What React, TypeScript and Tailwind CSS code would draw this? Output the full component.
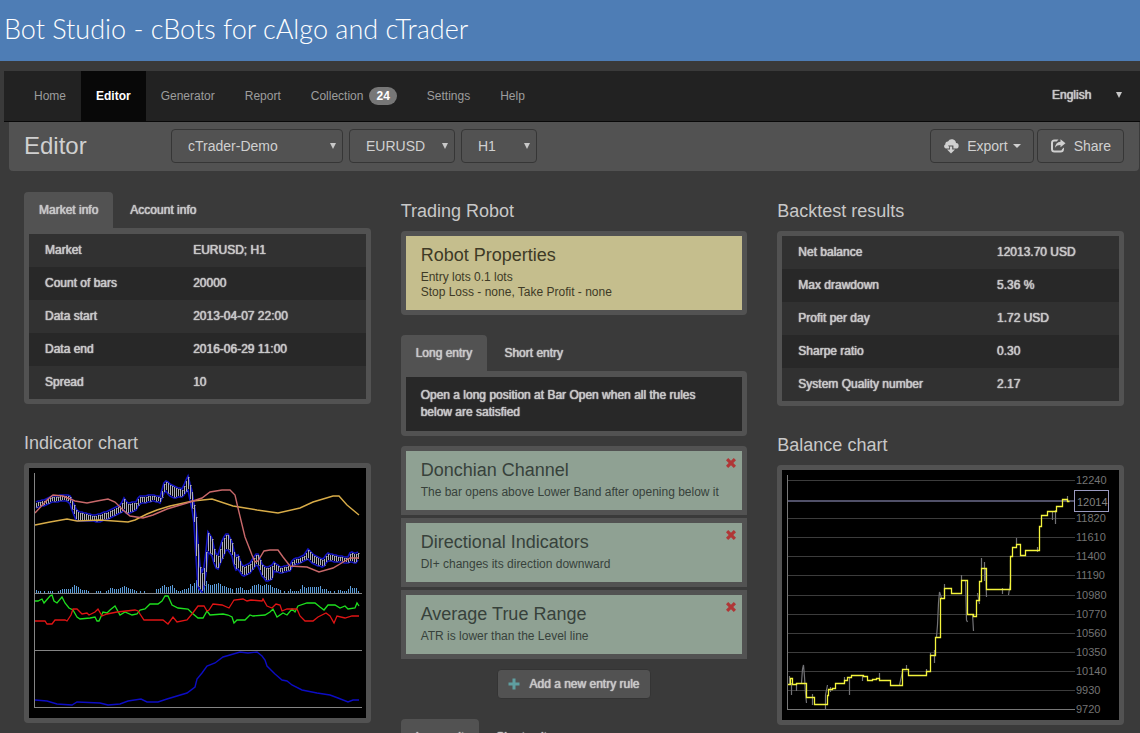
import { useState, type ReactNode } from 'react';

type Point = [number, number];

const navItems = ['Home', 'Editor', 'Generator', 'Report', 'Collection', 'Settings', 'Help'];

const marketInfo = [
  ['Market', 'EURUSD; H1'],
  ['Count of bars', '20000'],
  ['Data start', '2013-04-07 22:00'],
  ['Data end', '2016-06-29 11:00'],
  ['Spread', '10'],
];

const backtestResults = [
  ['Net balance', '12013.70 USD'],
  ['Max drawdown', '5.36 %'],
  ['Profit per day', '1.72 USD'],
  ['Sharpe ratio', '0.30'],
  ['System Quality number', '2.17'],
];

const initialRules = [
  { name: 'Donchian Channel', text: 'The bar opens above Lower Band after opening below it' },
  { name: 'Directional Indicators', text: 'DI+ changes its direction downward' },
  { name: 'Average True Range', text: 'ATR is lower than the Level line' },
];

// regular width letters with a heavier face
const strongText = '[text-shadow:0_0_1px_currentColor,0_0_1px_currentColor]';

// x, middle of the bar, half of its range
const price: [number, number, number][] = [
  [6, 37, 2], [14, 35, 2], [23, 31, 2], [38, 30, 2], [41, 32, 3], [46, 44, 5], [48, 48, 4], [63, 50, 2],
  [71, 50, 3], [84, 45, 3], [91, 41, 3], [95, 36, 5], [98, 41, 5], [107, 38, 3], [110, 32, 3], [124, 30, 2],
  [131, 32, 2], [136, 17, 4], [139, 20, 5], [144, 24, 5], [153, 25, 3], [159, 15, 6], [163, 32, 8],
  [166, 52, 9], [168, 85, 30], [170, 108, 12], [174, 116, 8], [177, 94, 10], [179, 74, 9], [183, 79, 8],
  [186, 92, 6], [189, 94, 6], [193, 82, 8], [198, 72, 7], [203, 81, 6], [206, 95, 6], [209, 94, 6],
  [214, 104, 4], [221, 100, 4], [228, 90, 5], [233, 102, 5], [238, 107, 6], [243, 104, 6], [244, 98, 4],
  [251, 102, 2], [261, 100, 2], [264, 94, 2], [274, 91, 2], [279, 86, 4], [284, 91, 4], [294, 95, 3],
  [299, 89, 3], [311, 91, 2], [319, 92, 2], [322, 88, 4], [326, 91, 4], [330, 87, 3],
];

const volume = [
  3, 2, 2, 0, 2, 0, 2, 2, 2, 0, 0, 2, 3, 4, 4, 4, 4, 4, 6, 8, 7, 6, 4, 3, 3, 3, 2, 0, 0, 0, 2, 2, 2, 0, 0, 2, 3,
  5, 5, 4, 4, 4, 5, 6, 7, 6, 5, 4, 4, 3, 2, 0, 2, 0, 2, 0, 0, 0, 0, 0, 4, 4, 5, 7, 8, 6, 6, 7, 8, 5, 3, 2, 2, 3,
  4, 4, 5, 9, 7, 10, 13, 10, 20, 10, 11, 12, 9, 8, 8, 9, 9, 10, 9, 7, 7, 6, 5, 5, 4, 0, 5, 5, 6, 5, 3, 3, 3, 4,
  7, 8, 8, 9, 8, 7, 8, 9, 8, 8, 6, 5, 5, 4, 3, 0, 2, 0, 2, 4, 2, 2, 2, 2, 4, 8, 6, 5, 6, 6, 6, 6, 6, 6, 7, 4, 4,
  4, 2, 2, 0, 2, 0, 3, 3, 2, 2, 2, 4, 7, 5, 5, 5, 2,
];

const slowAverage =
  '6,57 21,54 38,51 48,53 71,52 99,54 106,52 118,46 128,42 141,38 164,33 183,31 204,38 228,42 249,45 271,40 284,34 304,28 310,28 318,37 330,47';
const fastAverage =
  '6,45 18,32 24,27 34,28 46,33 58,35 68,33 79,31 86,34 94,42 101,48 114,50 124,47 138,41 158,35 173,30 181,24 193,22 201,22 206,27 209,40 216,69 223,87 226,94 229,93 235,83 241,82 249,82 254,89 261,98 278,99 290,104 304,100 316,93 321,90 330,90';
const diPlus =
  '6,133 9,133 13,131 15,135 21,128 23,127 25,133 28,135 33,129 36,135 40,140 44,142 48,149 51,151 61,150 66,149 68,153 70,153 74,144 78,145 81,142 86,138 91,147 96,144 103,147 108,146 111,142 116,141 121,136 129,136 133,133 136,128 139,128 143,137 149,140 159,141 163,145 169,150 174,150 178,143 181,147 194,146 199,147 203,149 205,155 208,152 216,152 221,147 224,148 236,147 241,144 244,141 248,149 254,145 258,147 263,141 266,144 269,138 278,135 286,135 291,139 295,142 299,137 306,137 311,140 316,138 319,141 326,140 328,135 330,138';
const diMinus =
  '6,153 16,153 18,156 23,156 26,152 36,152 38,153 42,147 44,141 48,141 53,146 58,145 60,147 66,144 69,141 73,148 78,146 88,144 106,142 109,143 115,152 134,152 139,156 144,149 148,154 158,152 163,146 169,138 175,138 178,143 180,142 184,136 193,137 200,140 205,132 214,131 218,133 222,132 233,133 234,131 238,138 243,140 247,136 251,137 253,143 258,141 268,141 271,148 276,153 284,153 289,149 297,145 301,148 305,155 308,148 316,150 323,148 330,148';
const trueRange =
  '6,232 18,233 28,236 43,237 48,234 71,235 79,237 91,236 99,233 112,231 118,234 129,234 138,231 158,225 166,219 168,211 173,205 178,198 186,195 194,189 201,187 211,184 219,185 228,184 233,188 236,192 238,198 246,206 253,212 258,213 263,217 273,222 288,225 301,227 309,230 319,234 324,232 330,232';

const balanceLine =
  'M6 214.5H8.5V208.5H10.5V214.5H14.5V213.5H24.5V227.5H32.5V234.5H45.5V225.5H46.5V219.5H50.5V218.5H53.5V213.5H62.5V210.5H65.5V207.5H69.5V205.5H81.5V206.5H85.5V210.5H90.5V209.5H94.5V208.5H97.5V210.5H108.5V215.5H120.5V199.5H126.5V205.5H144.5V201.5H148.5V185.5H153.5V167.5H158.5V128.5H162.5V118.5H169.5V123.5H179.5V110.5H185.5V144.5H191.5V146.5H194.5V130.5H197.5V111.5H199.5V98.5H204.5V119.5H228.5V86.5H230.5V77.5H234.5V74.5H238.5V85.5H243.5V80.5H257.5V56.5H259.5V45.5H265.5V41.5H274.5V36.5H280.5V29.5H285.5V31.5H287.5';
const equityLine =
  'M7.5 206V214M9.5 213V225M14.5 213V221M19.5 213L20.5 199L21.5 195L22.5 207L23.5 223L24.5 233M30.5 224V235M43.5 239V225L45.5 215M48.5 217V222M62.5 207V213M67.5 225V208M80.5 205V211M97.5 203V209M117.5 215L120.5 202M124.5 195V200M144.5 199V205M148.5 183V186M152.5 180V193M154.5 167L155.5 155L156.5 133L157.5 122L159.5 128M162.5 114V118M162.5 128V118M179.5 105V110M183.5 110L184.5 150L185.5 152M190.5 144L191.5 161M195.5 123L197.5 134M199.5 88V98M202.5 92V111M203.5 98L204.5 127M220.5 118V124M226.5 125L228.5 112V90M234.5 68V74M255.5 77V82M270.5 42V50M273.5 40V54M285.5 26V30';

const balanceTicks: Point[] = [
  [10, 12240], [48, 11820], [67, 11610], [86, 11400], [105, 11190], [125, 10980],
  [144, 10770], [163, 10560], [182, 10350], [201, 10140], [220, 9930], [239, 9720],
];

function priceAt(x: number): Point {
  const i = Math.max(1, price.findIndex((p) => p[0] >= x));
  const [x0, y0, r0] = price[i - 1];
  const [x1, y1, r1] = price[i];
  const k = (x - x0) / (x1 - x0);
  return [y0 + (y1 - y0) * k, r0 + (r1 - r0) * k];
}

const bars = volume.map((v, i) => {
  const x = 7 + i * 2;
  const [mid, range] = priceAt(x);
  return { x, v, high: Math.round(mid - range), low: Math.min(124, Math.round(mid + range)) };
});

function IndicatorChart() {
  return (
    <svg viewBox="0 0 337 250" preserveAspectRatio="xMinYMin slice" className="block w-full h-[250px] bg-black" role="img" aria-label="Indicator chart">
      <g fill="none" strokeWidth="1">
        {bars.map((b) => (
          <path key={b.x} d={`M${b.x + 0.5} 125V${125 - b.v}`} stroke="#5a9bd8" />
        ))}
        <polyline points={bars.map((b) => `${b.x},${b.high - 1}`).join(' ')} stroke="#1414c0" strokeWidth="1.7" />
        <polyline points={bars.map((b) => `${b.x},${b.low + 1}`).join(' ')} stroke="#1414c0" strokeWidth="1.7" />
        {bars.map((b, i) => (
          <path
            key={b.x}
            d={`M${b.x + 0.5} ${b.high}V${b.low}M${b.x + 0.5} ${(i % 3 ? b.high : b.low) + 0.5}h1`}
            stroke="#acacb8"
          />
        ))}
        <polyline points={slowAverage} stroke="#d8ac48" strokeWidth="1.4" />
        <polyline points={fastAverage} stroke="#c8686a" strokeWidth="1.4" />
        <polyline points={diPlus} stroke="#1ee01e" strokeWidth="1.3" />
        <polyline points={diMinus} stroke="#e01414" strokeWidth="1.3" />
        <polyline points={trueRange} stroke="#0c0cc4" strokeWidth="1.4" />
        <path d="M5.5 5V240M5 125.5H333M5 182.5H333M5 239.5H333" stroke="#848484" />
      </g>
    </svg>
  );
}

function BalanceChart() {
  return (
    <svg viewBox="0 0 337 250" preserveAspectRatio="xMinYMin slice" className="block w-full h-[250px] bg-black" role="img" aria-label="Balance chart">
      {balanceTicks.map(([y, label]) => (
        <g key={label}>
          <path d={`M6 ${y + 0.5}H293`} stroke={y === 239 ? '#777' : '#3c3c3c'} />
          <text x="294" y={y + 4} fontSize="11" fill="#747474">
            {label}
          </text>
        </g>
      ))}
      <path d="M6 31H292" stroke="#505068" strokeWidth="2" />
      <path d="M5.5 5V240" stroke="#777" />
      <path d={equityLine} fill="none" stroke="#727276" strokeWidth="1.2" />
      <path d={balanceLine} fill="none" stroke="#f4f43c" strokeWidth="1.3" />
      <rect x="292.5" y="20.5" width="34" height="21" fill="#000" stroke="#9a9ac0" />
      <text x="295" y="36" fontSize="11" fill="#808080">
        12014
      </text>
    </svg>
  );
}

function CloudDownloadIcon() {
  return (
    <svg viewBox="0 0 16 16" className="size-4" fill="currentColor" aria-hidden="true">
      <path d="M6.2 10.6V8.2h-1V7.6h5.2v3h2.3a2.8 2.8 0 0 0 .3-5.6A4.3 4.3 0 0 0 5 3.4a2.4 2.4 0 0 0-2.6 2.9A2.3 2.3 0 0 0 2.8 10.6z" />
      <path d="M7 8.6h2.2v2.8h2.8L8 15.4l-4-4h3z" />
    </svg>
  );
}

function ShareIcon() {
  return (
    <svg viewBox="0 0 16 16" className="size-4" fill="currentColor" aria-hidden="true">
      <path d="M8.5 1.500H4.500A3.500 3.500 0 0 0 1 5v6a3.500 3.500 0 0 0 3.500 3.500h6A3.500 3.500 0 0 0 14 11V9.500l-2 1.700A1.300 1.300 0 0 1 10.700 12.500H4.300A1.300 1.300 0 0 1 3 11.200V4.800a1.300 1.300 0 0 1 1.300-1.300h2.400z" />
      <path d="M10.500 1.200L15.500 5.300l-5 4V6.900C8 6.900 6.300 7.600 5 9.800 5.200 6.100 7.200 4 10.500 3.700z" />
    </svg>
  );
}

function RemoveIcon() {
  return (
    <svg viewBox="0 0 10 10" className="size-[10px]" fill="currentColor" aria-hidden="true">
      <path d="M2.200 0L5 2.800 7.800 0 10 2.200 7.300 5 10 7.800 7.800 10 5 7.200 2.200 10 0 7.800 2.700 5 0 2.200z" />
    </svg>
  );
}

function PlusIcon() {
  return (
    <svg viewBox="0 0 12 12" className="size-3" fill="currentColor" aria-hidden="true">
      <path d="M4.500.5h3v4h4v3h-4v4h-3v-4h-4v-3h4z" />
    </svg>
  );
}

function DownArrow({ className }: { className: string }) {
  return (
    <svg viewBox="0 0 6 6" className={`pointer-events-none absolute size-[6px] ${className}`} fill="currentColor" aria-hidden="true">
      <path d="M0 0h6L3 6z" />
    </svg>
  );
}

function ToolbarSelect({ label, options, className }: { label: string; options: string[]; className: string }) {
  return (
    <div className={`relative ${className}`}>
      <select
        aria-label={label}
        className="appearance-none w-full h-[34px] pl-4 rounded border border-[#363636] bg-[#525252] text-sm text-[#d0d0d0]"
      >
        {options.map((o) => (
          <option key={o}>{o}</option>
        ))}
      </select>
      <DownArrow className="right-[7px] top-[14px]" />
    </div>
  );
}

function Tabs({ items }: { items: string[] }) {
  const [active, setActive] = useState(0);
  return (
    <div className="flex gap-[2px]" role="tablist">
      {items.map((item, i) => (
        <button
          key={item}
          type="button"
          role="tab"
          aria-selected={i === active}
          onClick={() => setActive(i)}
          className={`h-9 px-[15px] rounded-t text-xs ${strongText} ${i === active ? 'bg-[#525252]' : ''}`}
        >
          {item}
        </button>
      ))}
    </div>
  );
}

function SectionTitle({ children, className = '' }: { children: ReactNode; className?: string }) {
  return <h2 className={`text-lg leading-5 mb-[10px] ${className}`}>{children}</h2>;
}

function InfoTable({ rows, labelWidth }: { rows: string[][]; labelWidth: string }) {
  return (
    <table className={`w-full table-fixed text-xs ${strongText}`}>
      <tbody>
        {rows.map(([label, value]) => (
          <tr key={label} className="h-[33px] odd:bg-[#313131] even:bg-[#282828]">
            <th scope="row" className={`pl-4 pb-[2px] text-left font-normal ${labelWidth}`}>
              {label}
            </th>
            <td className="pl-4 pb-[2px]">{value}</td>
          </tr>
        ))}
      </tbody>
    </table>
  );
}

export default function App() {
  const [rules, setRules] = useState(initialRules);

  return (
    <div className="h-screen overflow-hidden bg-[#3a3a3a] text-[#c8c8c8] font-['Liberation_Sans',Arial,sans-serif]">
      <header className="h-[61px] px-1 flex items-center bg-[#4e7db5]">
        <h1 className="pb-1 text-[27px] leading-9 font-light text-white font-['Lato',sans-serif]">
          Bot Studio - cBots for cAlgo and cTrader
        </h1>
      </header>

      <nav className="mt-[10px] ml-1 pl-[15px] flex items-start justify-between bg-[#222] border-b border-[#080808]">
        <div className="flex">
          {navItems.map((item) => (
            <a
              key={item}
              href="#"
              className={`h-[50px] px-[15px] flex items-center gap-[6px] text-xs ${
                item === 'Editor' ? 'bg-[#080808] text-white font-bold' : 'text-[#9d9d9d]'
              }`}
            >
              {item}
              {item === 'Collection' && (
                <span className="h-[18px] px-[7px] flex items-center rounded-full bg-[#777] text-xs font-bold text-white">24</span>
              )}
            </a>
          ))}
        </div>
        <div className="relative mt-[11px] w-[90px]">
          <select aria-label="Language" className={`appearance-none w-full h-6 px-[2px] bg-[#222] text-xs ${strongText}`}>
            <option>English</option>
            <option>Deutsch</option>
          </select>
          <DownArrow className="right-[18px] top-[10px]" />
        </div>
      </nav>

      <main className="pl-[9px] pr-px">
        <div className="px-[15px] pt-[7px] pb-2 flex items-start justify-between rounded-b bg-[#525252]">
          <div className="flex gap-[6px]">
            <h1 className="w-[141px] text-2xl leading-[34px] text-[#d0d0d0]">Editor</h1>
            <ToolbarSelect label="Account" options={['cTrader-Demo']} className="w-[172px]" />
            <ToolbarSelect label="Symbol" options={['EURUSD', 'GBPUSD']} className="w-[106px]" />
            <ToolbarSelect label="Period" options={['H1', 'H4', 'D1']} className="w-[76px]" />
          </div>
          <div className="flex gap-[3px] text-sm text-[#d0d0d0]">
            <button type="button" className="h-[34px] px-3 flex items-center rounded border border-[#363636]">
              <CloudDownloadIcon />
              <span className="ml-2">Export</span>
              <svg viewBox="0 0 8 4" className="ml-[5px] w-2 h-1" fill="currentColor" aria-hidden="true">
                <path d="M0 0h8L4 4z" />
              </svg>
            </button>
            <button type="button" className="h-[34px] px-3 flex items-center gap-2 rounded border border-[#363636]">
              <ShareIcon />
              Share
            </button>
          </div>
        </div>

        <div className="pt-[21px] grid grid-cols-3">
          <section className="px-[15px]">
            <Tabs items={['Market info', 'Account info']} />
            <div className="border-[5px] border-t-[6px] border-[#525252] rounded rounded-tl-none">
              <InfoTable rows={marketInfo} labelWidth="w-[44%]" />
            </div>
            <SectionTitle className="mt-[29px]">Indicator chart</SectionTitle>
            <div className="border-[5px] border-[#525252] rounded">
              <IndicatorChart />
            </div>
          </section>

          <section className="px-[15px] pt-[9px]">
            <SectionTitle>Trading Robot</SectionTitle>
            <div className="px-[15px] pt-[9px] pb-[10px] border-[5px] border-[#525252] rounded bg-[#c5be8d] bg-clip-padding text-[#3e3a26]">
              <h3 className="text-lg leading-5">Robot Properties</h3>
              <p className="mt-[5px] text-xs leading-[15px]">
                Entry lots 0.1 lots
                <br />
                Stop Loss - none, Take Profit - none
              </p>
            </div>

            <div className="mt-5">
              <Tabs items={['Long entry', 'Short entry']} />
            </div>
            <p className={`px-[15px] py-[10px] border-[5px] border-t-[6px] border-[#525252] rounded rounded-tl-none bg-[#282828] text-xs leading-[17px] ${strongText}`}>
              Open a long position at Bar Open when all the rules below are satisfied
            </p>

            <ul className="mt-[10px] flex flex-col gap-[3px]">
              {rules.map((rule) => (
                <li
                  key={rule.name}
                  className="relative px-[15px] pt-[9px] pb-[10px] border-[5px] border-[#525252] first:rounded-t bg-[#8fa193] text-[#37413b]"
                >
                  <h3 className="text-lg leading-5">{rule.name}</h3>
                  <p className="mt-[5px] text-xs leading-[15px] whitespace-nowrap">{rule.text}</p>
                  <button
                    type="button"
                    aria-label={`Remove ${rule.name}`}
                    onClick={() => setRules(rules.filter((r) => r !== rule))}
                    className="absolute right-[6px] top-[7px] text-[#b03636]"
                  >
                    <RemoveIcon />
                  </button>
                </li>
              ))}
            </ul>

            <div className="mt-[10px] mb-5 flex justify-center">
              <button
                type="button"
                className={`h-[30px] px-[10px] flex items-center gap-[9px] rounded border border-[#343434] bg-[#525252] text-xs ${strongText}`}
              >
                <span className="text-[#5f9ea0]">
                  <PlusIcon />
                </span>
                Add a new entry rule
              </button>
            </div>

            <Tabs items={['Long exit', 'Short exit']} />
          </section>

          <section className="px-[15px] pt-[9px]">
            <SectionTitle>Backtest results</SectionTitle>
            <div className="border-[5px] border-[#525252] rounded">
              <InfoTable rows={backtestResults} labelWidth="w-[59%]" />
            </div>
            <SectionTitle className="mt-[29px]">Balance chart</SectionTitle>
            <div className="border-[5px] border-[#525252] rounded">
              <BalanceChart />
            </div>
          </section>
        </div>
      </main>
    </div>
  );
}
